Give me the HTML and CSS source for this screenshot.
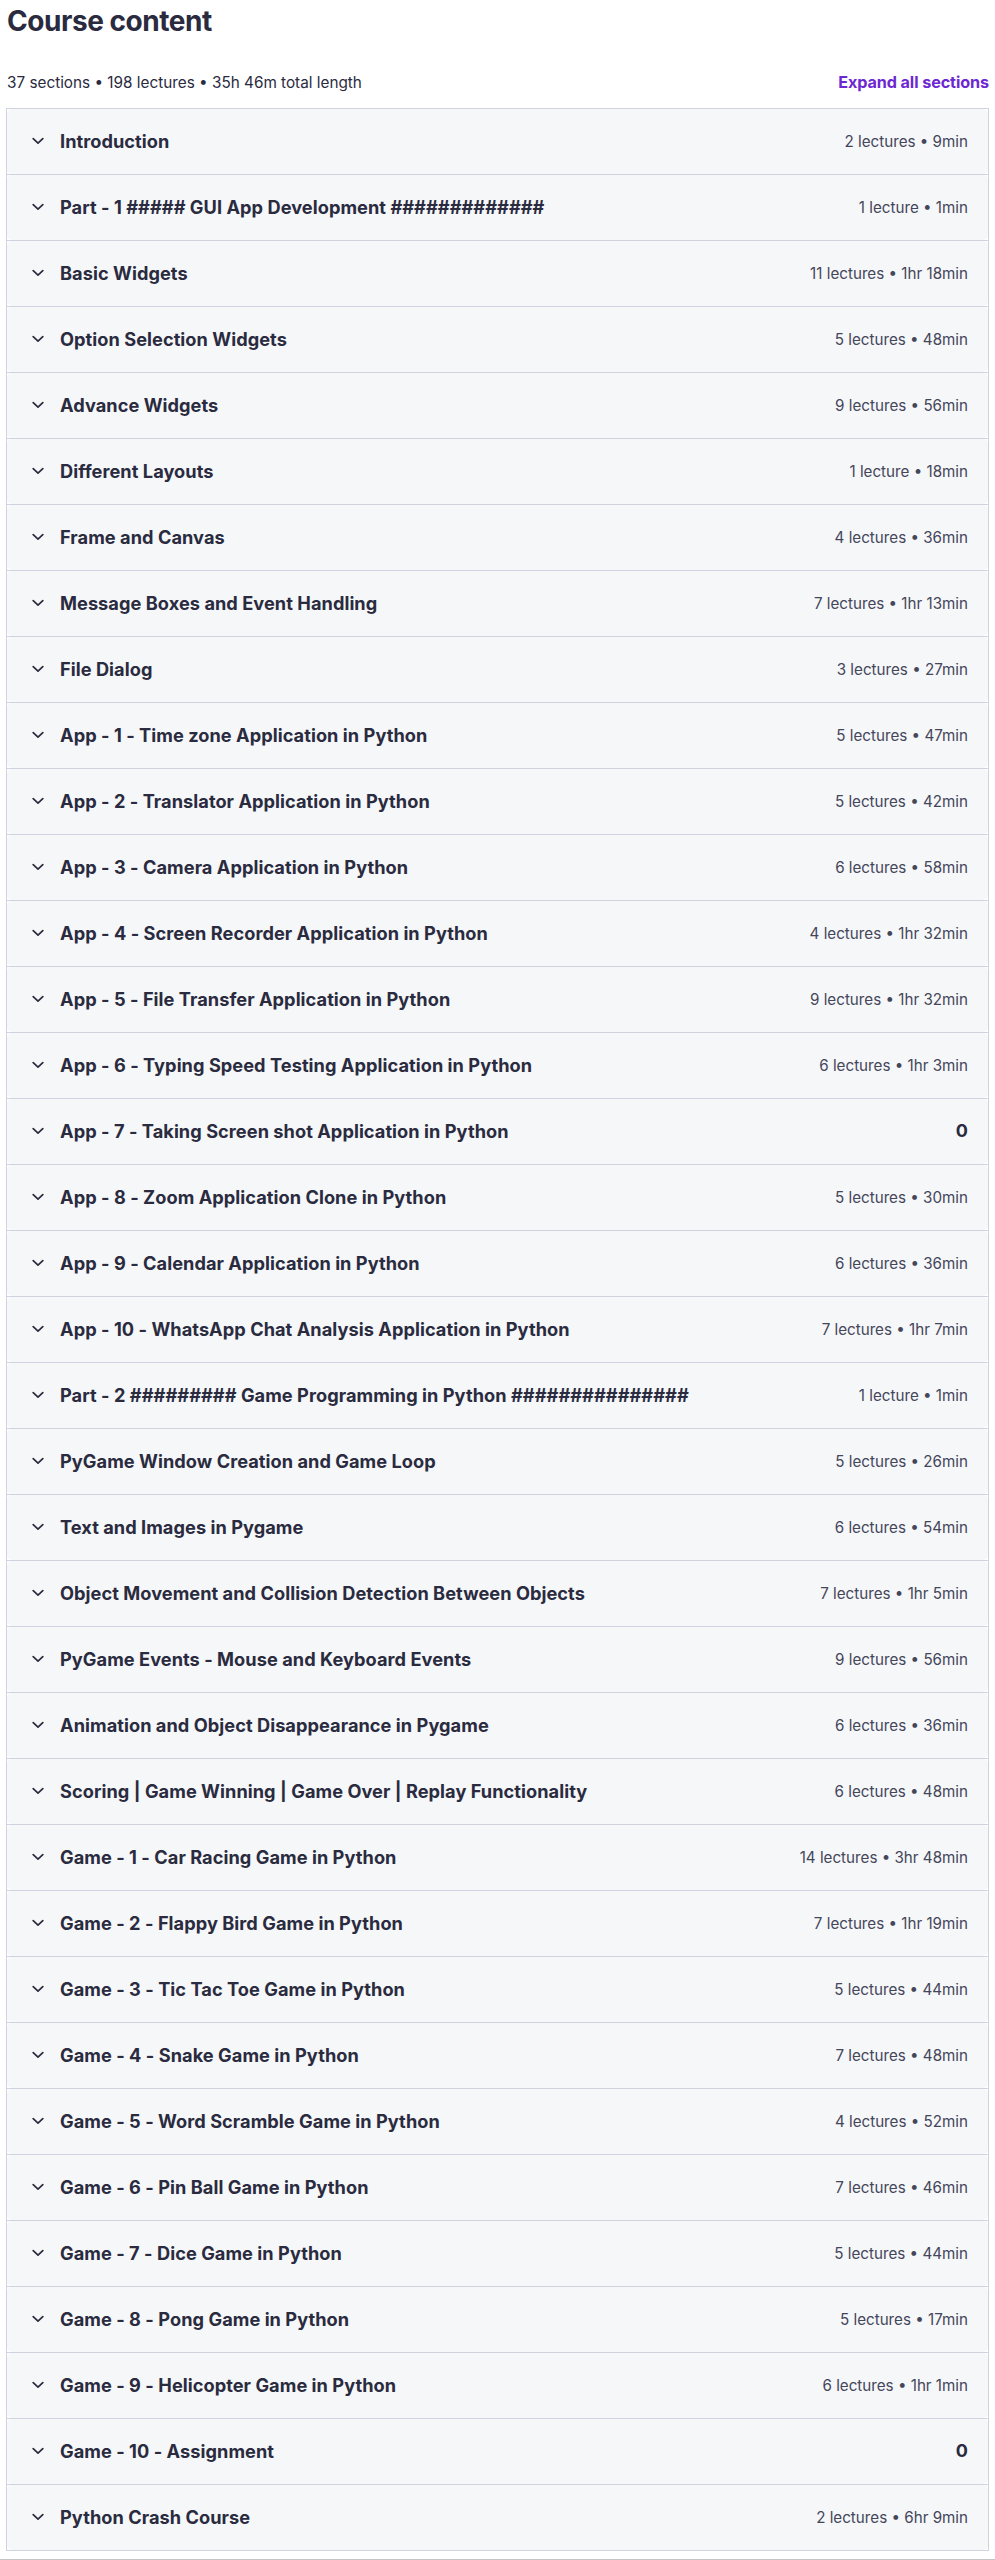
FILE: index.html
```html
<!DOCTYPE html>
<html lang="en">
<head>
<meta charset="utf-8">
<title>Course content</title>
<link rel="stylesheet" href="styles.css">
</head>
<body>
<main class="curriculum">
  <h2 class="curriculum-title">Course content</h2>
  <div class="curriculum-bar">
    <span class="curriculum-stats">37 sections • 198 lectures • 35h 46m total length</span>
    <button class="expand-all" type="button">Expand all sections</button>
  </div>
  <div class="accordion" id="sections"></div>
</main>
<div class="page-rule"></div>
<script src="app.js"></script>
</body>
</html>
```

FILE: app.js
```js
// Curriculum data: [section title, summary]. An empty summary renders as "0".
const sections = [
  ["Introduction", "2 lectures • 9min"],
  ["Part - 1 ##### GUI App Development #############", "1 lecture • 1min"],
  ["Basic Widgets", "11 lectures • 1hr 18min"],
  ["Option Selection Widgets", "5 lectures • 48min"],
  ["Advance Widgets", "9 lectures • 56min"],
  ["Different Layouts", "1 lecture • 18min"],
  ["Frame and Canvas", "4 lectures • 36min"],
  ["Message Boxes and Event Handling", "7 lectures • 1hr 13min"],
  ["File Dialog", "3 lectures • 27min"],
  ["App - 1 - Time zone Application in Python", "5 lectures • 47min"],
  ["App - 2 - Translator Application in Python", "5 lectures • 42min"],
  ["App - 3 - Camera Application in Python", "6 lectures • 58min"],
  ["App - 4 - Screen Recorder Application in Python", "4 lectures • 1hr 32min"],
  ["App - 5 - File Transfer Application in Python", "9 lectures • 1hr 32min"],
  ["App - 6 - Typing Speed Testing Application in Python", "6 lectures • 1hr 3min"],
  ["App - 7 - Taking Screen shot Application in Python", ""],
  ["App - 8 - Zoom Application Clone in Python", "5 lectures • 30min"],
  ["App - 9 - Calendar Application in Python", "6 lectures • 36min"],
  ["App - 10 - WhatsApp Chat Analysis Application in Python", "7 lectures • 1hr 7min"],
  ["Part - 2 ######### Game Programming in Python ###############", "1 lecture • 1min"],
  ["PyGame Window Creation and Game Loop", "5 lectures • 26min"],
  ["Text and Images in Pygame", "6 lectures • 54min"],
  ["Object Movement and Collision Detection Between Objects", "7 lectures • 1hr 5min"],
  ["PyGame Events - Mouse and Keyboard Events", "9 lectures • 56min"],
  ["Animation and Object Disappearance in Pygame", "6 lectures • 36min"],
  ["Scoring | Game Winning | Game Over | Replay Functionality", "6 lectures • 48min"],
  ["Game - 1 - Car Racing Game in Python", "14 lectures • 3hr 48min"],
  ["Game - 2 - Flappy Bird Game in Python", "7 lectures • 1hr 19min"],
  ["Game - 3 - Tic Tac Toe Game in Python", "5 lectures • 44min"],
  ["Game - 4 - Snake Game in Python", "7 lectures • 48min"],
  ["Game - 5 - Word Scramble Game in Python", "4 lectures • 52min"],
  ["Game - 6 - Pin Ball Game in Python", "7 lectures • 46min"],
  ["Game - 7 - Dice Game in Python", "5 lectures • 44min"],
  ["Game - 8 - Pong Game in Python", "5 lectures • 17min"],
  ["Game - 9 - Helicopter Game in Python", "6 lectures • 1hr 1min"],
  ["Game - 10 - Assignment", ""],
  ["Python Crash Course", "2 lectures • 6hr 9min"]
];

const chevron =
  '<svg class="chevron" viewBox="0 0 12 8" width="12" height="8" aria-hidden="true">' +
  '<path d="M1.2 1.6 L6 6.2 L10.8 1.6" fill="none" stroke="currentColor" stroke-width="1.7" stroke-linecap="round" stroke-linejoin="round"/></svg>';

const list = document.getElementById("sections");
list.innerHTML = sections.map(([title, summary]) => {
  const meta = summary
    ? `<span class="section-meta">${summary}</span>`
    : `<span class="section-meta section-meta--empty">0</span>`;
  return `<div class="section">
    <div class="section-header">
      ${chevron}
      <span class="section-title">${title}</span>
      ${meta}
    </div>
  </div>`;
}).join("");
```

FILE: styles.css
```css
html, body {
  margin: 0;
  padding: 0;
  background: #ffffff;
}

body {
  font-family: Inter, "Liberation Sans", sans-serif;
  color: #2a2b3f;
}

.curriculum {
  padding: 0 6px 8px 6px;
}

.curriculum-title {
  margin: 0;
  padding: 4px 0 0 1px;
  font-size: 28px;
  line-height: 34px;
  font-weight: 700;
  letter-spacing: -0.45px;
  color: #2a2b3f;
}

.curriculum-bar {
  display: flex;
  justify-content: space-between;
  align-items: baseline;
  margin-top: 34px;
  height: 36px;
}

.curriculum-stats {
  padding-left: 1px;
  font-size: 15.3px;
  line-height: 20px;
  color: #2a2b3f;
}

.expand-all {
  border: 0;
  background: none;
  padding: 0;
  font-family: inherit;
  font-size: 16.2px;
  line-height: 20px;
  font-weight: 700;
  letter-spacing: -0.1px;
  color: #6d28d2;
  cursor: pointer;
}

.accordion {
  border: 1px solid #d1d2e0;
  background: #ffffff;
}

.section + .section {
  border-top: 1px solid #d1d2e0;
}

.section-header {
  display: flex;
  align-items: center;
  height: 65px;
  padding: 0 20px 2px 25px;
  background: #f6f7f9;
  border-radius: 5px;
  box-sizing: border-box;
}

.chevron {
  flex: none;
  color: #2a2b3f;
  margin-right: 16px;
}

.section-title {
  flex: 1;
  font-size: 18.2px;
  font-weight: 700;
  letter-spacing: 0.05px;
  color: #2a2b3f;
  white-space: nowrap;
}

.section-meta {
  flex: none;
  padding-top: 2px;
  font-size: 15.2px;
  color: #44465a;
  white-space: nowrap;
}

.section-meta--empty {
  padding-top: 0;
  font-size: 18px;
  font-weight: 700;
  color: #2a2b3f;
}

.page-rule {
  height: 2px;
  background: #c4c4c4;
}
```
